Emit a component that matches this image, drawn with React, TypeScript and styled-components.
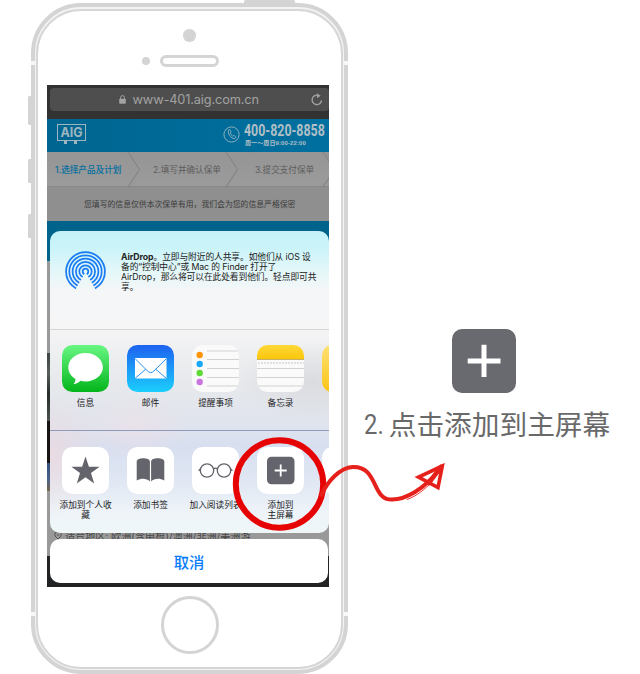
import React from "react";
import styled, { createGlobalStyle } from "styled-components";

const latin = `Inter, "Noto Sans CJK SC", sans-serif`;

const GlobalStyle = createGlobalStyle`
  * { box-sizing: border-box; }
  body { margin: 0; background: #fff; font-family: ${latin}; }
`;

const Page = styled.main`
  position: relative;
  display: flex;
  width: 640px;
  height: 674px;
  overflow: hidden;
  background: #fff;
`;

/* ---------- phone body ---------- */
const Phone = styled.section`
  position: relative;
  flex: none;
  width: 317px;
  height: 670.5px;
  margin: 3.3px 0 0 31px;
  border: 4px solid #d4d4d4;
  border-radius: 50px;
  background: #f3f3f3;
  padding: 1.3px 1px;
`;

const Face = styled.div`
  display: flex;
  flex-direction: column;
  align-items: center;
  height: 100%;
  border: 2.2px solid #d6d6d6;
  border-radius: 45px;
  background: #fff;
`;

const SideKey = styled.i<{ $x: number; $y: number; $w: number; $h: number }>`
  position: absolute;
  left: ${(p) => p.$x}px;
  top: ${(p) => p.$y}px;
  width: ${(p) => p.$w}px;
  height: ${(p) => p.$h}px;
  border-radius: 1.5px;
  background: #d4d4d4;
`;

const Band = styled(SideKey)`
  border-radius: 0;
  background: #f6f8f7;
`;

const Camera = styled.div`
  width: 12.5px;
  height: 12.5px;
  margin: 18.8px 0 0 -0.5px;
  border-radius: 50%;
  background: #d4d4d4;
`;

const SpeakerRow = styled.div`
  display: flex;
  align-items: center;
  gap: 10px;
  height: 12px;
  margin: 13px 18px 0 0;
`;

const Sensor = styled.i`
  width: 8px;
  height: 8px;
  border-radius: 50%;
  background: #d4d4d4;
`;

const Speaker = styled.i`
  width: 59px;
  height: 12px;
  border: 3px solid #d4d4d4;
  border-radius: 6px;
`;

const HomeButton = styled.div`
  width: 58px;
  height: 58px;
  margin-top: 8.500px;
  border: 3.2px solid #d4d4d4;
  border-radius: 50%;
`;

/* ---------- screen ---------- */
const Screen = styled.div`
  position: relative;
  flex: none;
  display: flex;
  flex-direction: column;
  width: 282px;
  height: 502px;
  margin: 18.2px 3px 0 0;
  overflow: hidden;
  background: #999;
`;

const AddressBar = styled.div`
  flex: none;
  height: 34px;
  padding: 3px 0 0 3px;
  background: #323232;
`;

const AddressField = styled.div`
  display: flex;
  align-items: center;
  height: 23px;
  padding: 0 6px 0 69px;
  border-radius: 4px;
  background: #4e4e4e;
  color: #a2a2a2;
  font-size: 12.8px;
  letter-spacing: -0.15px;
`;

const Url = styled.span`
  flex: 1;
  margin-left: 6.5px;
  white-space: nowrap;
`;

const SiteHeader = styled.div`
  flex: none;
  display: flex;
  align-items: flex-start;
  justify-content: space-between;
  height: 33px;
  padding: 4px 4px 0 10px;
  background: linear-gradient(90deg, #006590, #0070a0);
  color: #b2bfc5;
`;

const AigLogo = styled.div`
  position: relative;
  width: 29px;
  height: 17px;
  margin-top: 1px;
  border: 1.5px solid #9db5bf;
  color: #9db5bf;
  font: 700 12.5px/15px ${latin};
  text-align: center;
`;

const LogoFeet = styled.div`
  position: absolute;
  top: 16px;
  left: 6px;
  display: flex;
  gap: 7px;
  i { width: 3px; height: 3px; background: #9db5bf; }
`;

const Hotline = styled.div`
  display: flex;
  gap: 4px;
  svg { margin-top: 3px; }
`;

const HotlineText = styled.div`
  width: 81px;
  white-space: nowrap;
`;

const HotlineNumber = styled.div`
  width: 108px;
  font: 700 17.2px/15px Roboto, sans-serif;
  transform: scaleX(0.72);
  transform-origin: left;
`;

const HotlineHours = styled.div`
  margin-left: 1px;
  font: 700 6px/10px "Liberation Sans", "Noto Sans CJK SC", sans-serif;
  letter-spacing: 0.1px;
`;

const Steps = styled.div`
  flex: none;
  display: flex;
  height: 35px;
  border-bottom: 1px solid #888;
  background: linear-gradient(#959595, #9b9b9b);
  font-size: 8.6px;
  line-height: 36px;
  white-space: nowrap;
`;

const Step = styled.div<{ $w: number; $pad: number; $active?: boolean }>`
  display: flex;
  justify-content: space-between;
  flex: none;
  width: ${(p) => p.$w}px;
  padding-left: ${(p) => p.$pad}px;
  color: ${(p) => (p.$active ? "#006f9f" : "#5c5c5c")};
  font-weight: ${(p) => (p.$active ? 500 : 400)};
`;

const Notice = styled.div`
  flex: none;
  height: 33.5px;
  padding-left: 37px;
  background: #8f8f8f;
  color: #3c3c3c;
  font-size: 7.83px;
  line-height: 34px;
  white-space: nowrap;
`;

const PageStripe = styled.div<{ $h: number; $bg: string }>`
  flex: none;
  height: ${(p) => p.$h}px;
  background: ${(p) => p.$bg};
`;

const RegionLine = styled.div`
  display: flex;
  gap: 3px;
  flex: none;
  height: 65px;
  padding: 35px 0 0 7px;
  background: #999;
  color: #484848;
  font-size: 10.1px;
  line-height: 20px;
  white-space: nowrap;
  svg { margin-top: 5px; }
`;

/* ---------- share sheet ---------- */
const SheetLayer = styled.div`
  position: absolute;
  inset: 146px 0 4px 3px;
  display: flex;
  flex-direction: column;
  justify-content: space-between;
`;

const Sheet = styled.div`
  height: 301.5px;
  width: 278.5px;
  overflow: hidden;
  border-radius: 10px;
  background:
    linear-gradient(#c4f1f8 0, #cbf4f9 18px, #e4f7f9 40px, #f4f6f7 60px, #f6f6f7 98px, transparent 98px),
    radial-gradient(ellipse 55px 60px at 0 225px, #f5d7d899, transparent),
    radial-gradient(ellipse 55px 34px at 85px 198px, #f7dde366, transparent),
    radial-gradient(ellipse 75px 40px at 262px 150px, #cfd0d388, transparent),
    linear-gradient(#f4f4f5 98px, #e7e9ec 150px, #dfe3ed 196px, #d7dff0 215px, #dfe5f2 245px, #edf3f8 280px, #eff6f8 301px);
`;

const AirDropRow = styled.div`
  display: flex;
  gap: 15px;
  height: 98.5px;
  padding: 20px 0 0 15px;
  border-bottom: 1px solid #d3d5d6;
`;

const AirDropText = styled.p`
  margin: 0.5px 0 0;
  color: #222;
  font-size: 8.75px;
  letter-spacing: -0.1px;
  line-height: 10.15px;
  white-space: nowrap;
  span { display: block; }
`;

const ActionRow = styled.div<{ $top: number; $h: number; $line?: boolean }>`
  display: flex;
  gap: 18px;
  height: ${(p) => p.$h}px;
  padding: ${(p) => p.$top}px 0 0 12px;
  border-bottom: ${(p) => (p.$line ? "1px solid #8f9bbd" : "none")};
`;

const Action = styled.div`
  display: flex;
  flex-direction: column;
  align-items: center;
  flex: none;
  width: 47px;
`;

const Tile = styled.div<{ $bg?: string }>`
  display: flex;
  align-items: center;
  justify-content: center;
  flex: none;
  width: 47px;
  height: 47px;
  overflow: hidden;
  border-radius: 10.5px;
  background: ${(p) => p.$bg ?? "#fff"};
`;

const Label = styled.div`
  margin-top: 5.5px;
  color: #1c1c1e;
  font-size: 8.7px;
  line-height: 10px;
  text-align: center;
  white-space: pre;
`;

const CancelButton = styled.button`
  width: 278px;
  height: 44.5px;
  padding: 0;
  border: 0;
  border-radius: 10px;
  background: #fff;
  color: #0a7dfb;
  font: 500 15.3px/42px "Noto Sans CJK SC", sans-serif;
`;

/* ---------- instruction ---------- */
const Instruction = styled.section`
  display: flex;
  flex-direction: column;
  align-items: center;
  width: 262px;
  margin: 329px 0 0 5px;
`;

const PlusTile = styled.div`
  display: flex;
  align-items: center;
  justify-content: center;
  width: 64px;
  height: 64px;
  border-radius: 10px;
  background: #696970;
`;

const Caption = styled.h2`
  display: flex;
  margin: 9px 0 0 6px;
  color: #696969;
  font: 400 27.7px/42px "Noto Sans CJK SC", sans-serif;
  white-space: nowrap;
`;

const CaptionIndex = styled.span`
  width: 25px;
  font-family: Roboto, sans-serif;
  line-height: 45px;
  transform: scaleX(0.86);
  transform-origin: left;
`;

const Annotation = styled.svg`
  position: absolute;
  left: 228px;
  top: 430px;
`;

const Chevron = () => (
  <svg width="14" height="35" viewBox="0 0 14 35" fill="none">
    <path d="M1 0L12.5 17.5L1 35" stroke="#868686" strokeWidth="1.2" />
  </svg>
);

const Lock = () => (
  <svg width="7" height="9" viewBox="0 0 7 9">
    <rect x="0.2" y="3.8" width="6.6" height="5" rx="0.8" fill="#a2a2a2" />
    <path d="M1.6 4V2.5a1.9 1.9 0 0 1 3.8 0V4" stroke="#a2a2a2" fill="none" />
  </svg>
);

const Reload = () => (
  <svg width="12" height="13" viewBox="0 0 12 13" fill="none">
    <path d="M7.5 2.5A4.7 4.7 0 1 0 10.5 7.4" stroke="#a2a2a2" strokeWidth="1.3" />
    <path d="M6 .2L9.6 2.8L6 5.2Z" fill="#a2a2a2" />
  </svg>
);

const PhoneGlyph = () => (
  <svg width="17" height="17" viewBox="0 0 17 17" fill="none" stroke="#8fb0be">
    <circle cx="8.5" cy="8.5" r="7.6" />
    <path d="M5.2 4.2l1.5-.7 1.5 2.6-1 1q.7 1.8 2.4 3l1.2-.8 2.1 1.9-1.1 1.4q-1.8.6-4.3-1.9T5.2 4.2Z" strokeWidth=".9" />
  </svg>
);

const AirDropIcon = () => (
  <svg width="41" height="40" viewBox="0 0 41 40">
    <defs>
      <clipPath id="wedge">
        <path d="M20.5 21L9.5 40H0V0H41V40H31.5Z" />
      </clipPath>
    </defs>
    <g clipPath="url(#wedge)" fill="none" stroke="#1b7df2" strokeWidth="1.75">
      {[2.8, 6.2, 9.6, 12.9, 16.2, 19.4].map((r) => (
        <circle key={r} cx="20.5" cy="20.5" r={r} />
      ))}
    </g>
  </svg>
);

const MessageIcon = () => (
  <svg width="47" height="47" viewBox="0 0 47 47">
    <path d="M23.5 8C13.8 8 6.3 14.3 6.3 22.3c0 5 2.900 9.200 7.200 11.700-.1 2-.6 3.600-2 5 3.100-.1 5.100-1.300 7-3.200 1.600.5 3.300.7 5 .7 9.700 0 17.400-6.200 17.400-14.200S33.200 8 23.500 8Z" fill="#fff" />
  </svg>
);

const MailIcon = () => (
  <svg width="47" height="47" viewBox="0 0 47 47" fill="none">
    <rect x="8" y="13" width="31.500" height="20.500" fill="#fff" />
    <path d="M8 13.500L20.500 26q3.200 3.200 6.400 0L39.500 13.500M8 33.500L18.700 24.200M39.500 33.500L28.700 24.200" stroke="#2b93f3" />
  </svg>
);

const ReminderIcon = () => (
  <svg width="47" height="47" viewBox="0 0 47 47">
    {["#ff9408", "#1aa8f8", "#5edb36", "#c975df"].map((c, i) => (
      <circle key={c} cx="7.700" cy={10 + i * 9} r="3.200" fill={c} />
    ))}
    <path d="M15 6H46M15 14.500H47M15 23.500H47M15 32.500H47M15 41H46" stroke="#d2d2d3" />
  </svg>
);

const NotesIcon = () => (
  <svg width="47" height="47" viewBox="0 0 47 47">
    <defs>
      <linearGradient id="note" x2="0" y2="1">
        <stop stopColor="#ffd83a" />
        <stop offset="1" stopColor="#fcc60b" />
      </linearGradient>
    </defs>
    <rect width="47" height="14" fill="url(#note)" />
    <path d="M0 14.500H47" stroke="#c5ae66" />
    <path d="M1 18H47" stroke="#c9c9c9" strokeDasharray="2 1" />
    <path d="M0 23.500H47M0 32.500H47M0 41H47" stroke="#d2d2d3" />
  </svg>
);

const StarIcon = () => (
  <svg width="47" height="47" viewBox="0 0 47 47">
    <path d="M23.500 9.500L26.900 19.700H37.600L29 26.100L32.200 36.500L23.500 30.200L14.800 36.500L18 26.100L9.400 19.700H20.100Z" fill="#64646c" />
  </svg>
);

const BookIcon = () => (
  <svg width="47" height="47" viewBox="0 0 47 47" fill="#64646c">
    <path d="M22.900 34.500C20 31 14 30.800 9.700 33.500V14.500C9.700 10 22.900 10 22.900 14.500Z" />
    <path d="M24.100 34.500C27 31 33 30.800 37.300 33.500V14.500C37.300 10 24.100 10 24.100 14.500Z" />
  </svg>
);

const GlassesIcon = () => (
  <svg width="47" height="47" viewBox="0 0 47 47" fill="none" stroke="#64646c" strokeWidth="1.300">
    <circle cx="15" cy="23.500" r="6.700" />
    <circle cx="32" cy="23.500" r="6.700" />
    <path d="M21.400 22q2.100-1.700 4.200 0M8.400 22l-1.800 1.800M38.600 22l1.800 1.800" />
  </svg>
);

const AddIcon = () => (
  <svg width="47" height="47" viewBox="0 0 47 47">
    <rect x="10" y="9.800" width="27.500" height="27.500" rx="4.500" fill="#64646c" />
    <path d="M23.700 17.500V29.500M17.700 23.500H29.700" stroke="#fff" strokeWidth="1.800" />
  </svg>
);

const PlusIcon = () => (
  <svg width="34" height="34" viewBox="0 0 34 34">
    <path d="M17 .7V33M.7 17H33.500" stroke="#fff" strokeWidth="5" />
  </svg>
);

const Shield = () => (
  <svg width="8" height="9" viewBox="0 0 8 9" fill="none" stroke="#555">
    <path d="M1 1.500L4 .7L7 1.500V5L4 8L1 5ZM4 3V5" />
  </svg>
);

export default function App() {
  return (
    <>
      <GlobalStyle />
      <Page>
        <Phone>
          <SideKey $x={209} $y={-7} $w={51} $h={5} />
          <SideKey $x={-7.500} $y={88.500} $w={5} $h={29.500} />
          <SideKey $x={-7.500} $y={151.500} $w={5} $h={24} />
          <SideKey $x={-7.500} $y={207} $w={5} $h={24} />
          <Band $x={-4} $y={53.700} $w={4} $h={4} />
          <Band $x={309} $y={53.700} $w={4} $h={4} />
          <Band $x={-4} $y={604.700} $w={4} $h={4} />
          <Band $x={309} $y={604.700} $w={4} $h={4} />
          <Face>
            <Camera />
            <SpeakerRow>
              <Sensor />
              <Speaker />
            </SpeakerRow>
            <Screen>
              <AddressBar>
                <AddressField>
                  <Lock />
                  <Url>www-401.aig.com.cn</Url>
                  <Reload />
                </AddressField>
              </AddressBar>
              <SiteHeader>
                <AigLogo>
                  AIG
                  <LogoFeet><i /><i /></LogoFeet>
                </AigLogo>
                <Hotline>
                  <PhoneGlyph />
                  <HotlineText>
                    <HotlineNumber>400-820-8858</HotlineNumber>
                    <HotlineHours>周一～周日9:00-22:00</HotlineHours>
                  </HotlineText>
                </Hotline>
              </SiteHeader>
              <Steps>
                <Step $w={94} $pad={8} $active>1.选择产品及计划<Chevron /></Step>
                <Step $w={98} $pad={12}>2.填写并确认保单<Chevron /></Step>
                <Step $w={97} $pad={16}>3.提交支付保单<Chevron /></Step>
              </Steps>
              <Notice>您填写的信息仅供本次保单有用，我们会为您的信息严格保密</Notice>
              <PageStripe $h={40.500} $bg="#00638c" />
              <PageStripe $h={92} $bg="#999" />
              <PageStripe $h={68} $bg="linear-gradient(#3b4442, #59605b 30%, #252b29 60%, #4a5450)" />
              <PageStripe $h={42} $bg="#181414" />
              <PageStripe $h={28} $bg="linear-gradient(#324e7c, #4b6388 60%, #77684b)" />
              <RegionLine><Shield />适合地区: 欧洲(含申根)/澳洲/非洲/美洲游</RegionLine>
              <PageStripe $h={31} $bg="#222324" />
              <SheetLayer>
                <Sheet>
                  <AirDropRow>
                    <AirDropIcon />
                    <AirDropText>
                      <span><b>AirDrop</b>。立即与附近的人共享。如他们从 iOS 设</span>
                      <span>备的“控制中心”或 Mac 的 Finder 打开了</span>
                      <span>AirDrop，那么将可以在此处看到他们。轻点即可共</span>
                      <span>享。</span>
                    </AirDropText>
                  </AirDropRow>
                  <ActionRow $top={15.500} $h={101.500} $line>
                    <Action><Tile $bg="linear-gradient(#69f783, #03b51b)"><MessageIcon /></Tile><Label>信息</Label></Action>
                    <Action><Tile $bg="linear-gradient(#1d62f0, #1bcefd)"><MailIcon /></Tile><Label>邮件</Label></Action>
                    <Action><Tile $bg="#fafafa"><ReminderIcon /></Tile><Label>提醒事项</Label></Action>
                    <Action><Tile $bg="#fafafa"><NotesIcon /></Tile><Label>备忘录</Label></Action>
                    <Action><Tile $bg="linear-gradient(#ffe073, #fbc415)" /></Action>
                  </ActionRow>
                  <ActionRow $top={16} $h={101.500}>
                    <Action><Tile><StarIcon /></Tile><Label>{"添加到个人收\n藏"}</Label></Action>
                    <Action><Tile><BookIcon /></Tile><Label>添加书签</Label></Action>
                    <Action><Tile><GlassesIcon /></Tile><Label>加入阅读列表</Label></Action>
                    <Action><Tile><AddIcon /></Tile><Label>{"添加到\n主屏幕"}</Label></Action>
                    <Action><Tile /></Action>
                  </ActionRow>
                </Sheet>
                <CancelButton>取消</CancelButton>
              </SheetLayer>
            </Screen>
            <HomeButton />
          </Face>
        </Phone>
        <Instruction>
          <PlusTile><PlusIcon /></PlusTile>
          <Caption><CaptionIndex>2.</CaptionIndex>点击添加到主屏幕</Caption>
        </Instruction>
        <Annotation width="222" height="110" viewBox="228 430 222 110" fill="none">
          <circle cx="279.500" cy="484" r="43.700" stroke="#e60303" strokeWidth="6" />
          <g stroke="#e6201a" strokeWidth="4" strokeLinecap="round">
            <path d="M321.500 495C327 482 340 467.500 352.500 467C379 466 371 500 392 499.600C406 499.500 424 489 438 471" />
            <path d="M442.300 466L418.500 477L438 487.500Z" strokeWidth="3.600" strokeLinecap="butt" />
            <path d="M429 483L441 467" strokeWidth="4.500" />
            <path d="M407 499.500C417 496 425 489 432 482" strokeWidth="0.900" />
          </g>
        </Annotation>
      </Page>
    </>
  );
}
